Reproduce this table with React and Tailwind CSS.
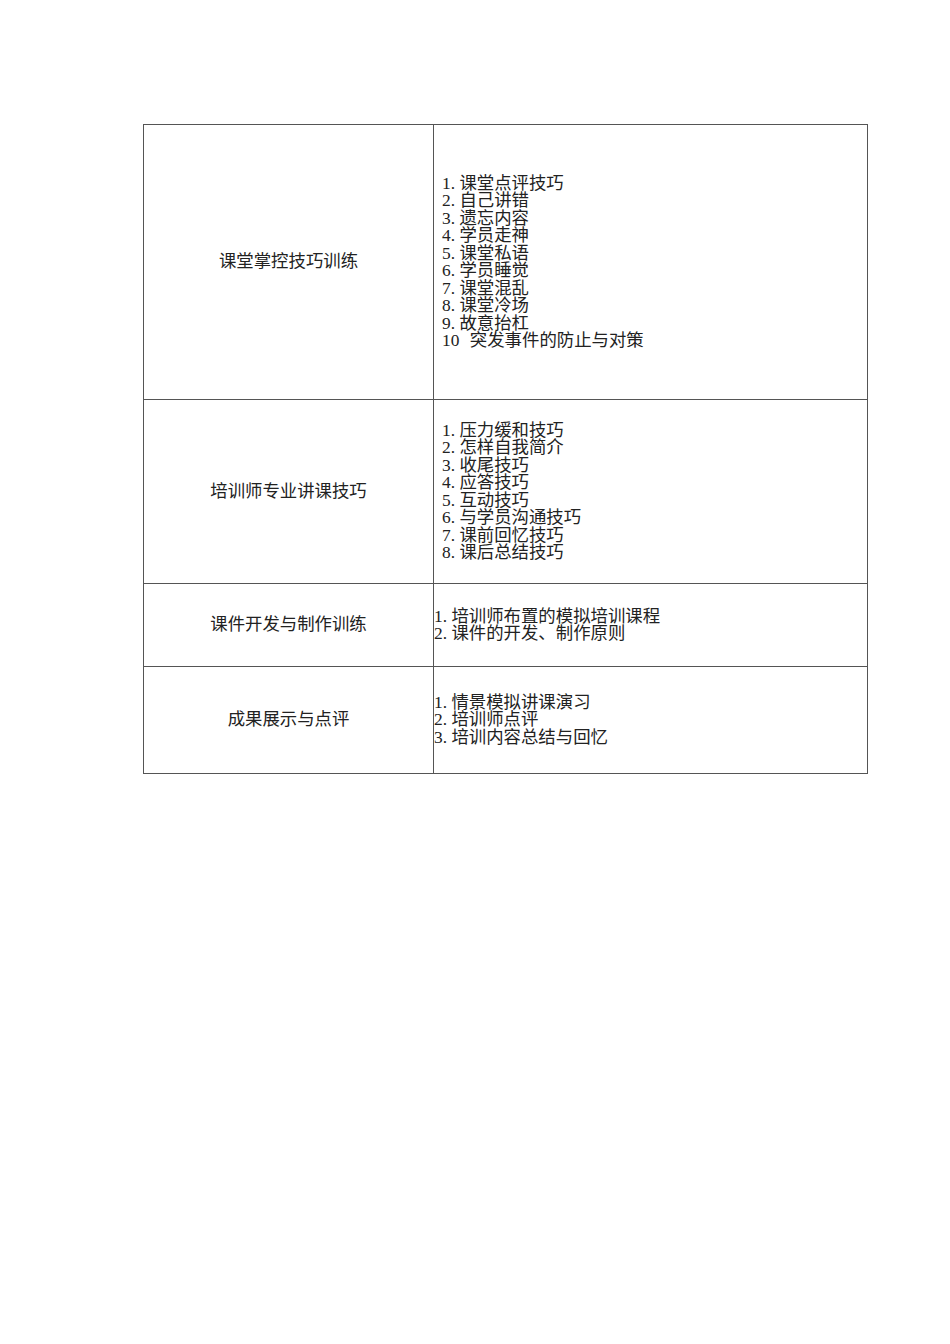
const rows = [
  {
    title: "课堂掌控技巧训练",
    h: "h-[275px]",
    pad: "pl-[8px]",
    items: [
      ["1.", "课堂点评技巧"],
      ["2.", "自己讲错"],
      ["3.", "遗忘内容"],
      ["4.", "学员走神"],
      ["5.", "课堂私语"],
      ["6.", "学员睡觉"],
      ["7.", "课堂混乱"],
      ["8.", "课堂冷场"],
      ["9.", "故意抬杠"],
      ["10", "突发事件的防止与对策", true],
    ],
  },
  {
    title: "培训师专业讲课技巧",
    h: "h-[184px]",
    pad: "pl-[8px]",
    items: [
      ["1.", "压力缓和技巧"],
      ["2.", "怎样自我简介"],
      ["3.", "收尾技巧"],
      ["4.", "应答技巧"],
      ["5.", "互动技巧"],
      ["6.", "与学员沟通技巧"],
      ["7.", "课前回忆技巧"],
      ["8.", "课后总结技巧"],
    ],
  },
  {
    title: "课件开发与制作训练",
    h: "h-[83px]",
    pad: "pl-0",
    items: [
      ["1.", "培训师布置的模拟培训课程"],
      ["2.", "课件的开发、制作原则"],
    ],
  },
  {
    title: "成果展示与点评",
    h: "h-[107px]",
    pad: "pl-0",
    items: [
      ["1.", "情景模拟讲课演习"],
      ["2.", "培训师点评"],
      ["3.", "培训内容总结与回忆"],
    ],
  },
];

export default function App() {
  return (
    <div className="w-[950px] min-h-[1344px] bg-white pt-[124px] pl-[143px] text-[#222] text-[17.4px] leading-[17.5px] font-['Liberation_Serif','Noto_Sans_CJK_SC',serif]">
      <div className="w-[725px] border-t border-l border-[#555] grid grid-cols-[290px_434px]">
        {rows.map((r) => (
          <div key={r.title} className="contents">
            <div className={`${r.h} border-r border-b border-[#555] flex items-center justify-center`}>
              {r.title}
            </div>
            <div className={`${r.h} border-r border-b border-[#555] flex flex-col justify-center ${r.pad}`}>
              {r.items.map(([n, t, wide]) => (
                <div key={n} className="whitespace-nowrap">
                  <span className={wide ? "inline-block w-[1.6em]" : "inline-block w-[1em]"}>{n}</span>
                  {t}
                </div>
              ))}
            </div>
          </div>
        ))}
      </div>
    </div>
  );
}
